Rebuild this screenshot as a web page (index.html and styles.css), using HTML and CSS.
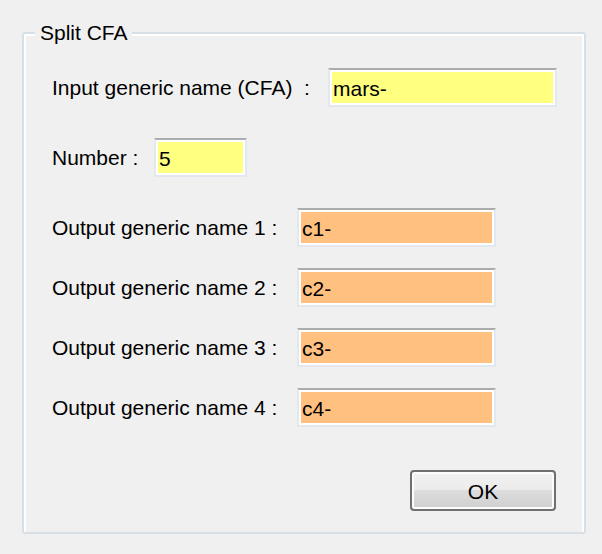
FILE: index.html
```html
<!DOCTYPE html>
<html lang="en">
<head>
    <meta charset="UTF-8">
    <title>Split CFA</title>
    <link rel="stylesheet" href="styles.css">
</head>
<body>

    <fieldset class="group">
        <legend class="group-title">Split CFA</legend>

        <div class="row row-first">
            <label class="lbl lbl-input" for="generic">Input generic name (CFA) &nbsp;:</label>
            <input class="field field-yellow field-wide" type="text" id="generic" value="mars-">
        </div>

        <div class="row">
            <label class="lbl lbl-number" for="number">Number :</label>
            <input class="field field-yellow field-small" type="text" id="number" value="5">
        </div>

        <div class="row">
            <label class="lbl lbl-output" for="out1">Output generic name 1 :</label>
            <input class="field field-orange field-output" type="text" id="out1" value="c1-">
        </div>

        <div class="row row-tight">
            <label class="lbl lbl-output" for="out2">Output generic name 2 :</label>
            <input class="field field-orange field-output" type="text" id="out2" value="c2-">
        </div>

        <div class="row row-tight">
            <label class="lbl lbl-output" for="out3">Output generic name 3 :</label>
            <input class="field field-orange field-output" type="text" id="out3" value="c3-">
        </div>

        <div class="row row-tight">
            <label class="lbl lbl-output" for="out4">Output generic name 4 :</label>
            <input class="field field-orange field-output" type="text" id="out4" value="c4-">
        </div>

        <div class="actions">
            <button class="btn" type="button">OK</button>
        </div>
    </fieldset>

</body>
</html>
```

FILE: styles.css
```css
body {
    font-family: 'Liberation Sans', Arial, sans-serif;
    font-size: 21px;
    background-color: #f0f0f0;
    color: #000;
    margin: 0;
    padding-top: 20px;
}

.group {
    margin: 0 16px 0 22px;
    padding: 0 0 20px 28px;
    height: 514px;
    box-sizing: border-box;
    border: 2px solid #d5dfe5;
    border-radius: 3px;
    box-shadow: inset 2px 2px 0 #fff, inset -2px 0 0 #fff, 0 2px 0 #fff;
}

.group-title {
    margin-left: -17px;
    padding: 0 4px 0 5px;
    line-height: 26px;
    background-color: #f0f0f0;
}

.row {
    display: flex;
    align-items: center;
    margin-top: 31px;
}

.row-first {
    margin-top: 22px;
}

.row-tight {
    margin-top: 21px;
}

.lbl {
    flex-shrink: 0;
    white-space: nowrap;
}

.lbl-input {
    width: 276px;
}

.lbl-number {
    width: 102px;
}

.lbl-output {
    width: 245px;
}

.field {
    height: 39px;
    box-sizing: border-box;
    padding: 2px 3px 0;
    font-family: inherit;
    font-size: 21px;
    color: #000;
    border: 2px solid;
    border-color: #acacac #e2e8ee #e2e8ee #e2e8ee;
    box-shadow: inset 0 0 0 2px #fff;
    outline: none;
}

.field-yellow {
    background-color: #ffff80;
}

.field-orange {
    background-color: #ffc080;
}

.field-wide {
    width: 229px;
}

.field-small {
    width: 93px;
}

.field-output {
    width: 199px;
}

.actions {
    display: flex;
    justify-content: flex-end;
    margin-top: 43px;
    padding-right: 28px;
}

.btn {
    width: 146px;
    height: 41px;
    padding: 2px 0 0;
    font-family: inherit;
    font-size: 21px;
    color: #000;
    border: 2px solid #707070;
    border-radius: 4px;
    background: linear-gradient(#f2f2f2 0, #ebebeb 50%, #dddddd 50%, #cfcfcf 100%);
    box-shadow: inset 0 0 0 2px #fcfcfc;
    cursor: pointer;
}
```
